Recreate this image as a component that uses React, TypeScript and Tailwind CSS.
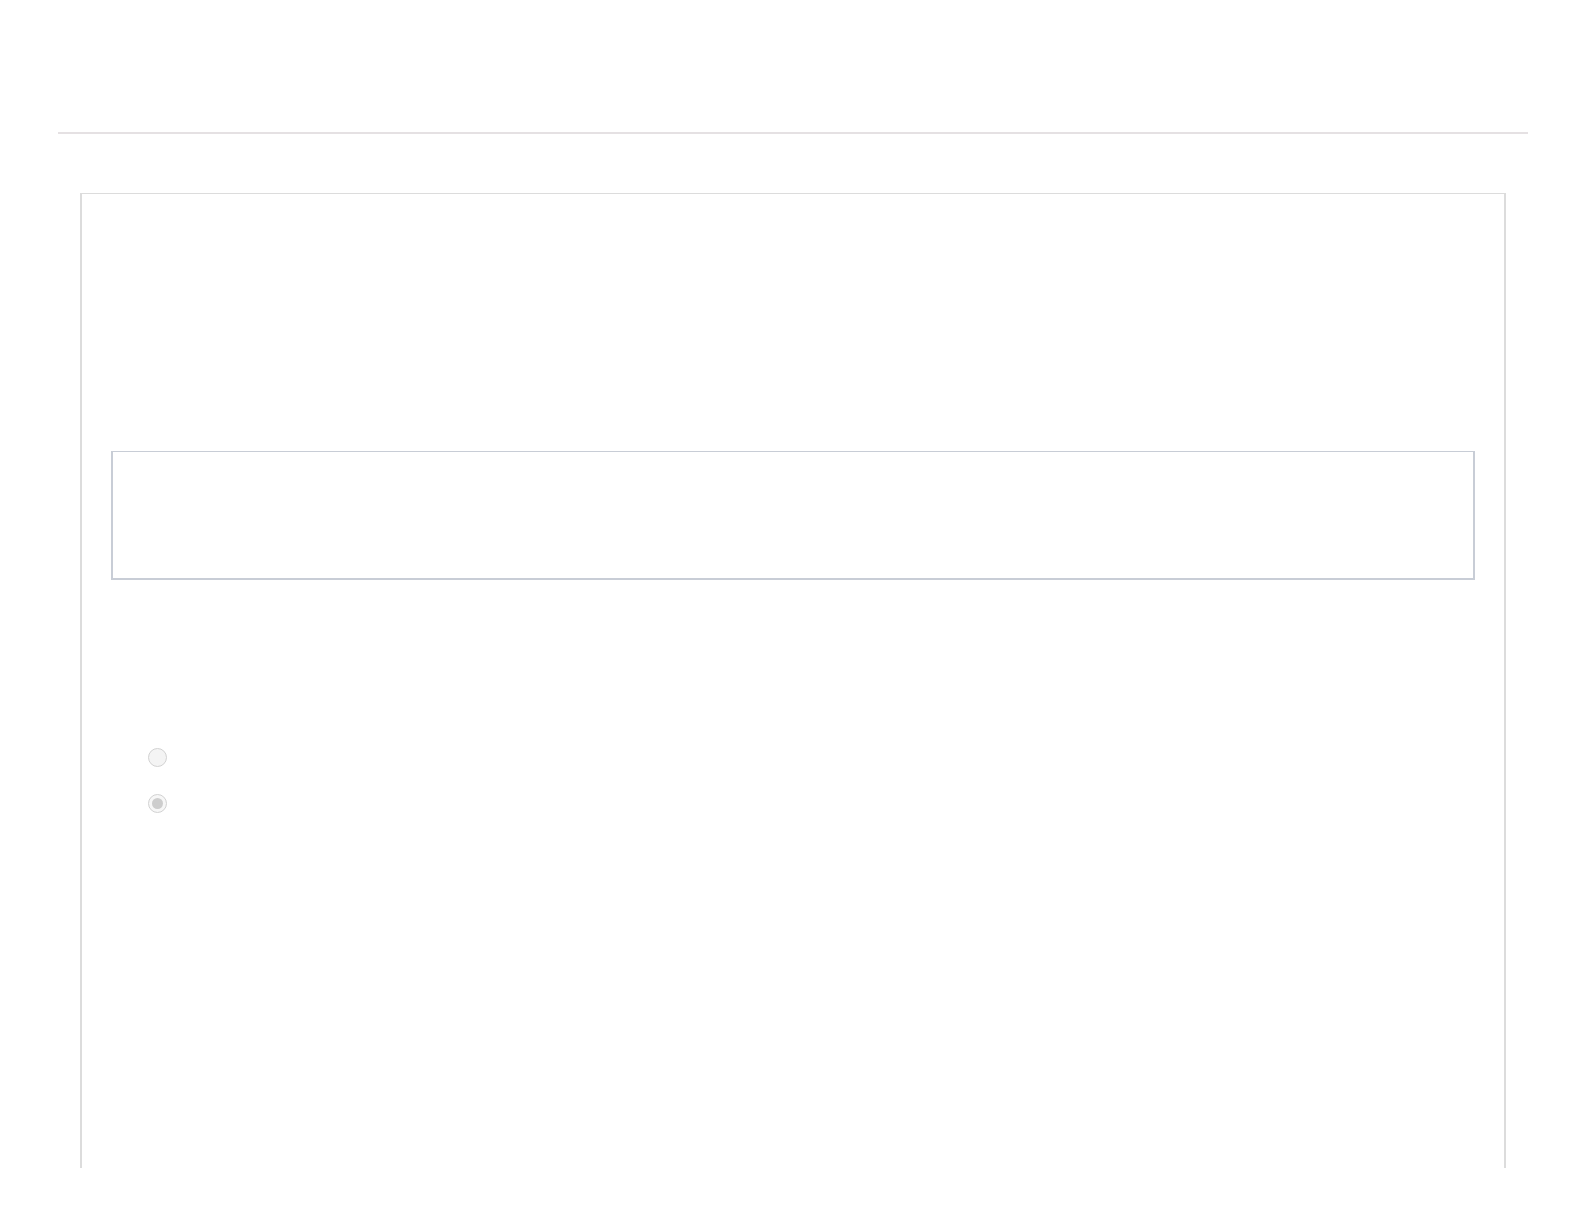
export default function App() {
  return (
    <div className="min-h-screen bg-white pt-[132px]">
      <div className="ml-[58px] mr-[56px] h-[2px] bg-[#e5e1e3]" />
      <div className="ml-[80px] mr-[78px] mt-[59px] h-[975px] border-x-2 border-t border-[#dcdcdc] pl-[29px] pr-[29px] pt-[257px]">
        <div className="h-[129px] border-x-2 border-b-2 border-t border-[#c8cdd6]" />
        <div className="mt-[168px] flex flex-col gap-[27px] pl-[37px]">
          <span className="block h-[19px] w-[19px] rounded-full border border-[#d2d2d2] bg-[#f4f4f4]" />
          <span className="flex h-[19px] w-[19px] items-center justify-center rounded-full border border-[#d2d2d2] bg-[#f7f7f7]">
            <span className="block h-[11px] w-[11px] rounded-full bg-[#cdcdcd]" />
          </span>
        </div>
      </div>
    </div>
  );
}
